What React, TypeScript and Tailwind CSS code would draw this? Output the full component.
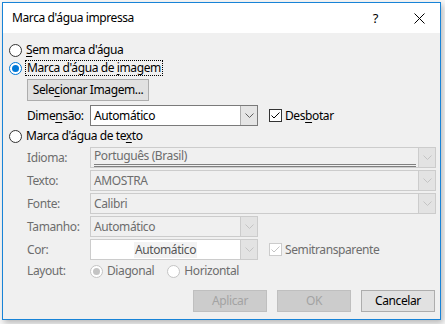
import type { ReactNode } from "react";

const font = { fontFamily: '"Noto Sans", "Open Sans", sans-serif' };

function Chevron({ disabled }: { disabled?: boolean }) {
  return (
    <svg width="9" height="5" viewBox="0 0 9 5" className="block">
      <path
        d="M0.5 0.5 L4.5 4.5 L8.5 0.5"
        fill="none"
        stroke={disabled ? "#c4c4c4" : "#606060"}
        strokeWidth="1"
      />
    </svg>
  );
}

function Radio({ checked, disabled }: { checked?: boolean; disabled?: boolean }) {
  const border = disabled ? "border-[#c4c4c4]" : checked ? "border-[#0078d7]" : "border-[#333333]";
  const dot = disabled ? "bg-[#c4c4c4]" : "bg-[#0078d7]";
  return (
    <span
      className={`flex h-[13px] w-[13px] shrink-0 items-center justify-center rounded-full border bg-white ${border}`}
    >
      {checked && <span className={`h-[7px] w-[7px] rounded-full ${dot}`} />}
    </span>
  );
}

function Check({ disabled }: { disabled?: boolean }) {
  return (
    <span
      className={`flex h-[13px] w-[13px] shrink-0 items-center justify-center border bg-white ${
        disabled ? "border-[#cccccc]" : "border-[#333333]"
      }`}
    >
      <svg width="11" height="11" viewBox="0 0 11 11">
        <path
          d="M1.5 5.5 L4 8 L9.5 2.5"
          fill="none"
          stroke={disabled ? "#c4c4c4" : "#000"}
          strokeWidth="1"
        />
      </svg>
    </span>
  );
}

function Combo({
  text,
  wide,
  disabled,
  children,
}: {
  text?: string;
  wide?: boolean;
  disabled?: boolean;
  children?: ReactNode;
}) {
  return (
    <div
      className={`flex h-[21px] shrink-0 border ${wide ? "w-[346px]" : "w-[168px]"} ${
        disabled ? "border-[#cccccc] bg-[#f0f0f0]" : "border-[#7a7a7a] bg-white"
      }`}
    >
      <div
        className={`flex min-w-0 flex-1 items-center pl-[3px] ${
          disabled ? "text-[#6d6d6d]" : "text-black"
        }`}
      >
        {children ?? text}
      </div>
      <div
        className={`flex w-[17px] items-center justify-center border-l ${
          disabled ? "border-[#cccccc] bg-[#e3e3e3]" : "border-[#adadad] bg-[#e5e5e5]"
        }`}
      >
        <Chevron disabled={disabled} />
      </div>
    </div>
  );
}

function Label({ children, disabled }: { children: ReactNode; disabled?: boolean }) {
  return (
    <div className={`w-[63px] shrink-0 ${disabled ? "text-[#6d6d6d]" : "text-black"}`}>
      {children}
    </div>
  );
}

function Btn({ children, disabled }: { children: ReactNode; disabled?: boolean }) {
  return (
    <div
      className={`flex h-[22px] w-[74px] items-center justify-center border ${
        disabled
          ? "border-[#bfbfbf] bg-[#cccccc] text-[#a3a3a3]"
          : "border-[#adadad] bg-[#e1e1e1] text-black"
      }`}
    >
      {children}
    </div>
  );
}

export default function App() {
  return (
    <div className="h-[324px] w-[445px] bg-[#f7f7f7] pl-[2px] pt-[2px]" style={font}>
      <div className="flex h-[318px] w-[439px] flex-col border border-[#1883d7] bg-[#f0f0f0] text-[12px] leading-[16px] tracking-[-0.4px] text-black shadow-[2px_3px_6px_rgba(0,0,0,0.25)]">
        <div className="flex h-[30px] shrink-0 items-center bg-white pl-[9px] pr-[15px]">
          <span className="text-[12px]">Marca d'água impressa</span>
          <span className="ml-auto mr-[36px] text-[13px]">?</span>
          <svg width="11" height="11" viewBox="0 0 11 11">
            <path d="M0.5 0.5 L10.5 10.5 M10.5 0.5 L0.5 10.5" stroke="#000" strokeWidth="1" />
          </svg>
        </div>

        <div className="flex flex-col pl-[6px]">
          <div className="mt-[9px] flex h-[16px] items-center gap-[4px]">
            <Radio />
            <span>
              <u className="underline-offset-2">S</u>em marca d'água
            </span>
          </div>
          <div className="mt-[2px] flex h-[16px] items-center gap-[3px]">
            <Radio checked />
            <span className="border border-dotted border-black px-[1px] leading-[14px]">
              Marca d'água de <u className="underline-offset-2">i</u>magem
            </span>
          </div>

          <div className="mt-[3px] pl-[18px]">
            <div className="flex h-[22px] w-[122px] items-center justify-center border border-[#adadad] bg-[#e1e1e1]">
              Sele<u className="underline-offset-2">c</u>ionar Imagem...
            </div>
          </div>

          <div className="mt-[4px] flex items-center pl-[18px]">
            <Label>
              Dime<u className="underline-offset-2">n</u>são:
            </Label>
            <Combo text="Automático" />
            <div className="ml-[11px] flex items-center gap-[3px]">
              <Check />
              <span>
                Des<u className="underline-offset-2">b</u>otar
              </span>
            </div>
          </div>

          <div className="mt-[2px] flex h-[16px] items-center gap-[4px]">
            <Radio />
            <span>
              Marca d'água de te<u className="underline-offset-2">x</u>to
            </span>
          </div>

          <div className="mt-[3px] flex flex-col gap-[2px] pl-[18px]">
            <div className="flex items-center">
              <Label disabled>Idioma:</Label>
              <Combo wide disabled>
                <div className="flex w-full flex-col pr-[2px]">
                  <span className="leading-[14px]">Português (Brasil)</span>
                  <span className="mt-[1px] h-[3px] w-full border-y border-[#808080]" />
                </div>
              </Combo>
            </div>
            <div className="flex items-center">
              <Label disabled>Texto:</Label>
              <Combo wide disabled text="AMOSTRA" />
            </div>
            <div className="flex items-center">
              <Label disabled>Fonte:</Label>
              <Combo wide disabled text="Calibri" />
            </div>
            <div className="flex items-center">
              <Label disabled>Tamanho:</Label>
              <Combo disabled text="Automático" />
            </div>
            <div className="flex items-center">
              <Label disabled>Cor:</Label>
              <div className="flex h-[21px] w-[168px] shrink-0 border border-[#cccccc] bg-white">
                <div className="flex flex-1 items-center justify-center">
                  <span className="bg-[#f3f3f3] px-[1px] text-[#555555]">Automático</span>
                </div>
                <div className="flex w-[17px] items-center justify-center border-l border-[#cccccc] bg-[#e3e3e3]">
                  <Chevron disabled />
                </div>
              </div>
              <div className="ml-[11px] flex items-center gap-[3px]">
                <Check disabled />
                <span className="text-[#6d6d6d]">Semitransparente</span>
              </div>
            </div>
            <div className="mt-[1px] flex h-[16px] items-center">
              <Label disabled>Layout:</Label>
              <div className="flex items-center gap-[4px]">
                <Radio checked disabled />
                <span className="text-[#6d6d6d]">Diagonal</span>
              </div>
              <div className="ml-[13px] flex items-center gap-[4px]">
                <Radio disabled />
                <span className="text-[#6d6d6d]">Horizontal</span>
              </div>
            </div>
          </div>

          <div className="mt-[11px] flex justify-end gap-[10px] pr-[5px]">
            <Btn disabled>Aplicar</Btn>
            <Btn disabled>OK</Btn>
            <Btn>Cancelar</Btn>
          </div>
        </div>
      </div>
    </div>
  );
}
